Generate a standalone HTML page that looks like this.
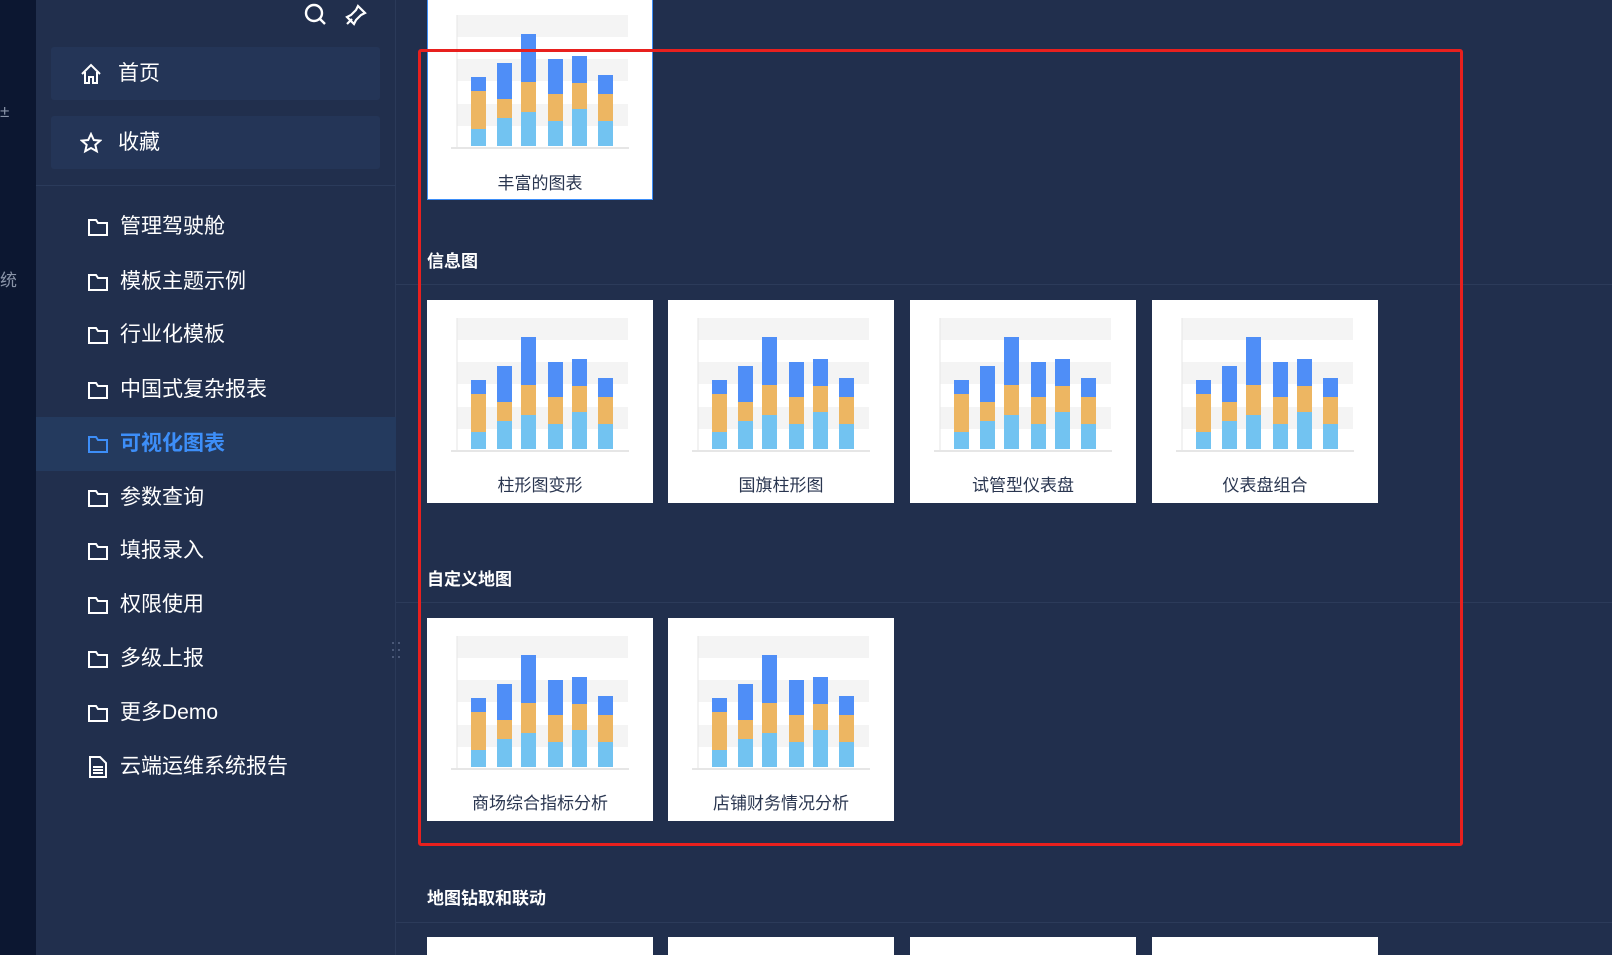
<!DOCTYPE html>
<html style="width:1612px;height:955px;overflow:hidden"><head><meta charset="utf-8"><style>
*{margin:0;padding:0;box-sizing:border-box}
body{width:1612px;height:955px;overflow:hidden;background:#212f4d;font-family:"Liberation Sans","Noto Sans CJK SC",sans-serif;position:relative}
.strip{position:absolute;left:0;top:0;width:36px;height:955px;background:#0c1731}
.strip span{position:absolute;left:0;color:#8a94a8;font-size:17px}
.side{position:absolute;left:36px;top:0;width:360px;height:955px;background:#212f4d;border-right:1px solid #2b3a59}
.box{position:absolute;left:15px;width:329px;height:53px;background:#243557;border-radius:3px;color:#fff;font-size:21px;line-height:53px;padding-left:67px}
.box svg{position:absolute;left:29px;top:16px}
.hr{position:absolute;left:0;top:185px;width:360px;height:1px;background:#2b3b5b}
.item{position:absolute;left:0;width:360px;height:54px;color:#fff;font-size:21px;line-height:54px;padding-left:84px}
.item svg{position:absolute;left:52px;top:18px}
.item.act{background:#243a5e;color:#3d8ef8;font-weight:bold}
.h{position:absolute;left:427px;color:#fff;font-weight:bold;font-size:17px}
.line{position:absolute;left:396px;width:1216px;height:1px;background:#2c3b5a}
.card{position:absolute;width:226px;height:203px;background:#fff;overflow:hidden}
.card svg{position:absolute;left:0;top:0}
.card div{position:absolute;left:0;width:226px;top:171px;text-align:center;font-size:17px;color:#2a3650}
.red{position:absolute;left:418px;top:49px;width:1045px;height:797px;border:3px solid #e8201e;border-radius:3px}
</style></head><body>
<svg width="0" height="0" style="position:absolute"><defs><g id="ch">
<rect x="30" y="18" width="171" height="22" fill="#f4f4f4"/><rect x="30" y="62" width="171" height="22" fill="#f4f4f4"/><rect x="30" y="107" width="171" height="22" fill="#f4f4f4"/>
<line x1="30" y1="18" x2="30" y2="151" stroke="#e6e6e6"/><line x1="24" y1="151" x2="202" y2="151" stroke="#e6e6e6" stroke-width="2"/>
<g>
<rect x="44" y="80" width="15" height="14" fill="#4f8ef7"/><rect x="44" y="94" width="15" height="38" fill="#edb662"/><rect x="44" y="132" width="15" height="17" fill="#72c3f1"/>
<rect x="70" y="66" width="15" height="36" fill="#4f8ef7"/><rect x="70" y="102" width="15" height="19" fill="#edb662"/><rect x="70" y="121" width="15" height="28" fill="#72c3f1"/>
<rect x="94" y="37" width="15" height="48" fill="#4f8ef7"/><rect x="94" y="85" width="15" height="30" fill="#edb662"/><rect x="94" y="115" width="15" height="34" fill="#72c3f1"/>
<rect x="121" y="62" width="15" height="35" fill="#4f8ef7"/><rect x="121" y="97" width="15" height="27" fill="#edb662"/><rect x="121" y="124" width="15" height="25" fill="#72c3f1"/>
<rect x="145" y="59" width="15" height="27" fill="#4f8ef7"/><rect x="145" y="86" width="15" height="26" fill="#edb662"/><rect x="145" y="112" width="15" height="37" fill="#72c3f1"/>
<rect x="171" y="78" width="15" height="19" fill="#4f8ef7"/><rect x="171" y="97" width="15" height="27" fill="#edb662"/><rect x="171" y="124" width="15" height="25" fill="#72c3f1"/>
</g></g></defs></svg>
<div class="strip"><span style="top:102px">±</span><span style="top:266px">统</span></div>
<div class="side">
<svg style="position:absolute;left:268px;top:3px" width="24" height="24" viewBox="0 0 24 24" fill="none" stroke="#fff" stroke-width="2.4"><circle cx="10" cy="10" r="8"/><path d="M16 16l5 5"/></svg>
<svg style="position:absolute;left:308px;top:3px" width="24" height="24" viewBox="0 0 24 24" fill="none" stroke="#fff" stroke-width="2.2"><path d="M14 3l7 7-4 2-5 5-2 4-7-7 4-2 5-5z M3 21l5-5"/></svg>
<div class="box" style="top:47px"><svg width="22" height="22" viewBox="0 0 22 22" fill="none" stroke="#fff" stroke-width="2"><path d="M2 11L11 2l9 9M5 9v11h4v-6h4v6h4V9"/></svg>首页</div>
<div class="box" style="top:116px"><svg width="22" height="22" viewBox="0 0 22 22" fill="none" stroke="#fff" stroke-width="2"><path d="M11 2l2.8 6 6.4.6-4.9 4.3 1.5 6.4L11 16l-5.8 3.3 1.5-6.4L1.8 8.6 8.2 8z"/></svg>收藏</div>
<div class="hr"></div>
<div class="item" style="top:200px"><svg width="20" height="18" viewBox="0 0 20 18" fill="none" stroke="#fff" stroke-width="2"><path d="M1 2h7l2 3h9v12H1z"/></svg>管理驾驶舱</div>
<div class="item" style="top:255px"><svg width="20" height="18" viewBox="0 0 20 18" fill="none" stroke="#fff" stroke-width="2"><path d="M1 2h7l2 3h9v12H1z"/></svg>模板主题示例</div>
<div class="item" style="top:308px"><svg width="20" height="18" viewBox="0 0 20 18" fill="none" stroke="#fff" stroke-width="2"><path d="M1 2h7l2 3h9v12H1z"/></svg>行业化模板</div>
<div class="item" style="top:363px"><svg width="20" height="18" viewBox="0 0 20 18" fill="none" stroke="#fff" stroke-width="2"><path d="M1 2h7l2 3h9v12H1z"/></svg>中国式复杂报表</div>
<div class="item act" style="top:417px"><svg width="20" height="18" viewBox="0 0 20 18" fill="none" stroke="#3d8ef8" stroke-width="2"><path d="M1 2h7l2 3h9v12H1z"/></svg>可视化图表</div>
<div class="item" style="top:471px"><svg width="20" height="18" viewBox="0 0 20 18" fill="none" stroke="#fff" stroke-width="2"><path d="M1 2h7l2 3h9v12H1z"/></svg>参数查询</div>
<div class="item" style="top:524px"><svg width="20" height="18" viewBox="0 0 20 18" fill="none" stroke="#fff" stroke-width="2"><path d="M1 2h7l2 3h9v12H1z"/></svg>填报录入</div>
<div class="item" style="top:578px"><svg width="20" height="18" viewBox="0 0 20 18" fill="none" stroke="#fff" stroke-width="2"><path d="M1 2h7l2 3h9v12H1z"/></svg>权限使用</div>
<div class="item" style="top:632px"><svg width="20" height="18" viewBox="0 0 20 18" fill="none" stroke="#fff" stroke-width="2"><path d="M1 2h7l2 3h9v12H1z"/></svg>多级上报</div>
<div class="item" style="top:686px"><svg width="20" height="18" viewBox="0 0 20 18" fill="none" stroke="#fff" stroke-width="2"><path d="M1 2h7l2 3h9v12H1z"/></svg>更多Demo</div>
<div class="item" style="top:740px"><svg width="20" height="22" viewBox="0 0 20 22" fill="none" stroke="#fff" stroke-width="2" style="top:16px"><path d="M2 1h10l6 6v14H2z M5 11h10M5 14h10M5 17h10"/></svg>云端运维系统报告</div>
<svg style="position:absolute;left:354px;top:640px" width="12" height="20"><g fill="#4a5877"><rect x="2" y="2" width="2" height="2"/><rect x="8" y="2" width="2" height="2"/><rect x="2" y="9" width="2" height="2"/><rect x="8" y="9" width="2" height="2"/><rect x="2" y="16" width="2" height="2"/><rect x="8" y="16" width="2" height="2"/></g></svg>
</div>

<div class="card" style="left:427px;top:-3px;border:1px solid #3d8ef8"><svg width="226" height="203" style="left:-1px;top:-1px"><use href="#ch"/></svg><div style="left:-1px">丰富的图表</div></div>

<div class="h" style="top:247px">信息图</div><div class="line" style="top:284px"></div>
<div class="card" style="left:427px;top:300px"><svg width="226" height="203"><use href="#ch"/></svg><div>柱形图变形</div></div>
<div class="card" style="left:668px;top:300px"><svg width="226" height="203"><use href="#ch"/></svg><div>国旗柱形图</div></div>
<div class="card" style="left:910px;top:300px"><svg width="226" height="203"><use href="#ch"/></svg><div>试管型仪表盘</div></div>
<div class="card" style="left:1152px;top:300px"><svg width="226" height="203"><use href="#ch"/></svg><div>仪表盘组合</div></div>

<div class="h" style="top:565px">自定义地图</div><div class="line" style="top:602px"></div>
<div class="card" style="left:427px;top:618px"><svg width="226" height="203"><use href="#ch"/></svg><div>商场综合指标分析</div></div>
<div class="card" style="left:668px;top:618px"><svg width="226" height="203"><use href="#ch"/></svg><div>店铺财务情况分析</div></div>

<div class="h" style="top:884px">地图钻取和联动</div><div class="line" style="top:922px"></div>
<div class="card" style="left:427px;top:937px;height:18px"></div>
<div class="card" style="left:668px;top:937px;height:18px"></div>
<div class="card" style="left:910px;top:937px;height:18px"></div>
<div class="card" style="left:1152px;top:937px;height:18px"></div>

<div class="red"></div>
</body></html>
